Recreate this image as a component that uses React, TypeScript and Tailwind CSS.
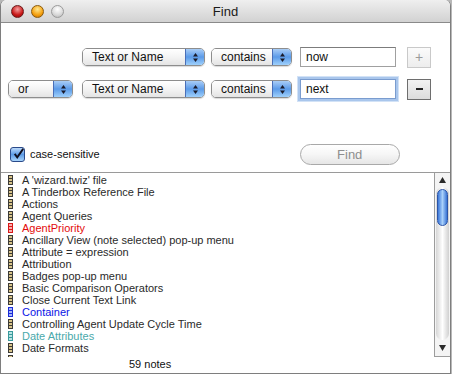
import React from 'react';

type Kind = 'n' | 'r' | 'b' | 't';

const notes: [string, Kind][] = [
    ["A 'wizard.twiz' file", 'n'],
    ['A Tinderbox Reference File', 'n'],
    ['Actions', 'n'],
    ['Agent Queries', 'n'],
    ['AgentPriority', 'r'],
    ['Ancillary View (note selected) pop-up menu', 'n'],
    ['Attribute = expression', 'n'],
    ['Attribution', 'n'],
    ['Badges pop-up menu', 'n'],
    ['Basic Comparison Operators', 'n'],
    ['Close Current Text Link', 'n'],
    ['Container', 'b'],
    ['Controlling Agent Update Cycle Time', 'n'],
    ['Date Attributes', 't'],
    ['Date Formats', 'n'],
];

const textColor: Record<Kind, string> = {
    n: 'text-[#2a2a2a]',
    r: 'text-[#e30b0b]',
    b: 'text-[#0a14e6]',
    t: 'text-[#4aa9ab]',
};

const iconColors: Record<Kind, [string, string]> = {
    n: ['#3c3a36', '#d8c48a'],
    r: ['#d81818', '#f8b0b0'],
    b: ['#1a2ad8', '#a8b8f8'],
    t: ['#3a9a9c', '#b8e4e4'],
};

function NoteIcon({ kind }: { kind: Kind }) {
    const [dark, light] = iconColors[kind];
    return (
        <svg width="5" height="10" viewBox="0 0 5 10" className="shrink-0">
            <rect x="0" y="0" width="5" height="10" fill={dark} />
            <rect x="1" y="1" width="3" height="2" fill={light} />
            <rect x="1" y="4" width="3" height="2" fill={light} />
            <rect x="1" y="7" width="3" height="2" fill={light} />
        </svg>
    );
}

function Arrows() {
    return (
        <svg width="7" height="11" viewBox="0 0 7 11">
            <path d="M3.5 1 L6 4.5 L1 4.5 Z" fill="#1b1b2a" />
            <path d="M3.5 10 L6 6.5 L1 6.5 Z" fill="#1b1b2a" />
        </svg>
    );
}

function Popup({ label, width }: { label: string; width: string }) {
    return (
        <div className={`${width} h-[18px] flex rounded-[5px] border border-[#8d8d8d] overflow-hidden shadow-[0_1px_1px_rgba(0,0,0,0.15)]`}>
            <div className="flex-1 flex items-center pl-[9px] bg-gradient-to-b from-[#ffffff] via-[#f4f4f4] to-[#e4e4e4] text-[12px] text-[#111]">
                {label}
            </div>
            <div className="w-[19px] flex items-center justify-center border-l border-[#4a6fb8] bg-gradient-to-b from-[#a9cdf6] via-[#5b9ae8] to-[#9fd0fb]">
                <Arrows />
            </div>
        </div>
    );
}

function Field({ value, focused }: { value: string; focused?: boolean }) {
    return (
        <div
            className={`w-[96px] h-[20px] flex items-center pl-[5px] bg-white text-[12px] text-[#111] border ${
                focused
                    ? 'border-[#7a9ccf] shadow-[0_0_0_2px_#a9c6ec,0_0_0_3px_#d2e2f6]'
                    : 'border-[#a0a0a0] border-t-[#7c7c7c]'
            }`}
        >
            {value}
        </div>
    );
}

export default function App() {
    return (
        <div className="w-[452px] h-[374px] bg-[#b8b8b8] overflow-hidden" style={{ fontFamily: '"Liberation Sans", Arial, sans-serif' }}>
            <div className="w-[451px] h-[374px] flex flex-col rounded-t-[6px] overflow-hidden border-l border-r border-b border-[#7e7e7e] bg-white">
                {/* title bar */}
                <div className="h-[23px] shrink-0 relative flex items-center justify-center border-b border-[#8a8a8a] bg-gradient-to-b from-[#efefef] to-[#d2d2d2]">
                    <div className="absolute left-[10px] top-[5px] flex gap-[7px]">
                        <span className="w-[13px] h-[13px] rounded-full border border-[#6a1a1a] bg-[radial-gradient(circle_at_50%_30%,#f6a0a0,#c81818_60%,#8a0a0a)]" />
                        <span className="w-[13px] h-[13px] rounded-full border border-[#8a5a0a] bg-[radial-gradient(circle_at_50%_30%,#ffe890,#f4a010_60%,#c06a00)]" />
                        <span className="w-[13px] h-[13px] rounded-full border border-[#9a9a9a] bg-[radial-gradient(circle_at_50%_30%,#ffffff,#d8d8d8_60%,#b0b0b0)]" />
                    </div>
                    <span className="text-[13px] text-[#1a1a1a] pt-[1px]">Find</span>
                </div>

                {/* criteria */}
                <div className="flex flex-col pt-[24px] gap-[12px]">
                    <div className="flex items-center pl-[81px] h-[20px]">
                        <Popup label="Text or Name" width="w-[123px]" />
                        <div className="w-[6px]" />
                        <Popup label="contains" width="w-[81px]" />
                        <div className="w-[8px]" />
                        <Field value="now" />
                        <div className="w-[11px]" />
                        <div className="w-[24px] h-[21px] flex items-center justify-center border border-[#c9c9c9] bg-gradient-to-b from-[#fbfbfb] to-[#ededed] text-[14px] text-[#9a9a9a]">+</div>
                    </div>
                    <div className="flex items-center pl-[7px] h-[20px]">
                        <Popup label="or" width="w-[65px]" />
                        <div className="w-[9px]" />
                        <Popup label="Text or Name" width="w-[123px]" />
                        <div className="w-[6px]" />
                        <Popup label="contains" width="w-[81px]" />
                        <div className="w-[8px]" />
                        <Field value="next" focused />
                        <div className="w-[11px]" />
                        <div className="w-[24px] h-[21px] flex items-center justify-center border border-[#6e6e6e] bg-gradient-to-b from-[#f2f2f2] to-[#dcdcdc]">
                            <span className="w-[7px] h-[2px] bg-[#222]" />
                        </div>
                    </div>
                </div>

                {/* options */}
                <div className="flex items-center h-[21px] mt-[45px] pl-[9px]">
                    <div className="w-[15px] h-[15px] rounded-[3px] border border-[#2a4a8a] bg-gradient-to-b from-[#bcd9fa] via-[#5c9be6] to-[#a8d4fb] flex items-center justify-center">
                        <svg width="13" height="13" viewBox="0 0 13 13" className="-mt-[3px] ml-[2px]">
                            <path d="M2 7 L5 11 L12 1" stroke="#101020" strokeWidth="2.2" fill="none" />
                        </svg>
                    </div>
                    <span className="ml-[5px] text-[11px] text-[#111]">case-sensitive</span>
                    <div className="ml-[200px] w-[100px] h-[21px] rounded-full border border-[#a9a9a9] bg-gradient-to-b from-[#ffffff] via-[#f6f6f6] to-[#e6e6e6] flex items-center justify-center text-[13px] text-[#8e8e8e]">
                        Find
                    </div>
                </div>

                {/* list */}
                <div className="mt-[7px] border-t border-[#9a9a9a] h-[185px] flex">
                    <div className="flex-1 overflow-hidden pt-[1px]">
                        {notes.map(([name, kind]) => (
                            <div key={name} className="h-[12px] flex items-center pl-[7px]">
                                <NoteIcon kind={kind} />
                                <span className={`ml-[9px] text-[11px] leading-[12px] whitespace-nowrap ${textColor[kind]}`}>{name}</span>
                            </div>
                        ))}
                        <div className="h-[12px] flex items-start pt-[1px] pl-[7px]">
                            <NoteIcon kind="n" />
                        </div>
                    </div>
                    <div className="w-[16px] flex flex-col border-l border-b border-[#9c9c9c] bg-[#f4f4f4]">
                        <div className="h-[14px] flex items-center justify-center">
                            <svg width="7" height="6" viewBox="0 0 7 6"><path d="M3.5 0 L7 6 L0 6 Z" fill="#2a2a2a" /></svg>
                        </div>
                        <div className="flex-1 mx-[1px] rounded-full bg-gradient-to-r from-[#d6d6d6] via-[#ffffff] to-[#d0d0d0] pt-[2px] relative">
                            <div className="mx-[1px] h-[37px] rounded-full border border-[#2c55a8] bg-gradient-to-r from-[#3d78d8] via-[#a9d0fa] to-[#3a74d4]" />
                        </div>
                        <div className="h-[16px] flex items-center justify-center">
                            <svg width="7" height="6" viewBox="0 0 7 6"><path d="M3.5 6 L7 0 L0 0 Z" fill="#2a2a2a" /></svg>
                        </div>
                    </div>
                </div>

                {/* status */}
                <div className="flex-1 pl-[128px] text-[11px] text-[#111] leading-[14px]">59 notes</div>
            </div>
        </div>
    );
}
